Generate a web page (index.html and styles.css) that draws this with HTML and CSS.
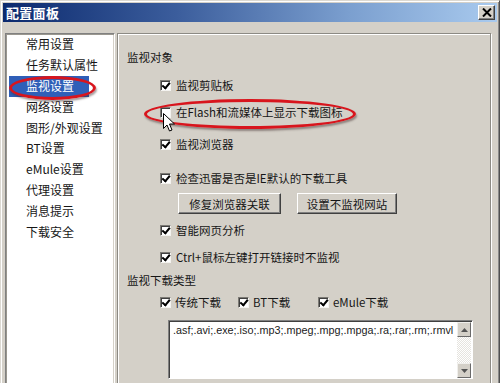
FILE: index.html
```html
<!DOCTYPE html>
<html lang="zh-CN">
<head>
<meta charset="utf-8">
<title>配置面板</title>
<link rel="stylesheet" href="styles.css">
</head>
<body>
<div class="window">
  <div class="titlebar">
    <span class="title">配置面板</span>
    <span class="close"><svg width="10" height="9" viewBox="0 0 10 9"><path d="M1 0.5 L9 8.5 M9 0.5 L1 8.5" stroke="#000" stroke-width="2"/></svg></span>
  </div>
  <div class="body">
    <ul class="nav">
      <li>常用设置</li>
      <li>任务默认属性</li>
      <li><span class="sel">监视设置</span></li>
      <li>网络设置</li>
      <li>图形/外观设置</li>
      <li>BT设置</li>
      <li>eMule设置</li>
      <li>代理设置</li>
      <li>消息提示</li>
      <li>下载安全</li>
    </ul>
    <div class="panel">
      <div class="row label">监视对象</div>
      <div class="row cb g12"><span class="box on"></span>监视剪贴板</div>
      <div class="row cb g11"><span class="box"></span>在Flash和流媒体上显示下载图标</div>
      <div class="row cb g16"><span class="box on"></span>监视浏览器</div>
      <div class="row cb g18"><span class="box on"></span>检查迅雷是否是IE默认的下载工具</div>
      <div class="btns">
        <span class="btn w103">修复浏览器关联</span>
        <span class="btn w100">设置不监视网站</span>
      </div>
      <div class="row cb g8"><span class="box on"></span>智能网页分析</div>
      <div class="row cb g11"><span class="box on"></span>Ctrl+鼠标左键打开链接时不监视</div>
      <div class="row label g7">监视下载类型</div>
      <div class="row cb g6">
        <span class="opt w78"><span class="box on"></span>传统下载</span>
        <span class="opt w80"><span class="box on"></span>BT下载</span>
        <span class="opt"><span class="box on"></span>eMule下载</span>
      </div>
      <div class="textbox">
        <div class="text">.asf;.avi;.exe;.iso;.mp3;.mpeg;.mpg;.mpga;.ra;.rar;.rm;.rmvl</div>
        <div class="scroll">
          <span class="sbtn"><svg width="7" height="4" viewBox="0 0 7 4"><path d="M3.5 0 L7 4 L0 4 Z" fill="#555"/></svg></span>
          <span class="track"></span>
          <span class="sbtn"><svg width="7" height="4" viewBox="0 0 7 4"><path d="M0 0 L7 0 L3.5 4 Z" fill="#555"/></svg></span>
        </div>
      </div>
    </div>
  </div>
  <div class="mark mark-nav"></div>
  <div class="mark mark-flash"></div>
  <svg class="cursor" width="13" height="20" viewBox="0 0 13 20"><path d="M0.5 0.5 L0.5 15.5 L4 12 L6.5 18 L9 17 L6.5 11 L11.5 11 Z" fill="#fff" stroke="#000" stroke-width="1"/></svg>
</div>
</body>
</html>
```

FILE: styles.css
```css
* { box-sizing: border-box; }
html, body { margin: 0; padding: 0; }
body {
  width: 500px;
  height: 383px;
  overflow: hidden;
  background: #d4d0c8;
  font-family: "Noto Sans CJK SC", "Liberation Sans", sans-serif;
  font-size: 11.5px;
  color: #161616;
}
.window {
  position: relative;
  width: 500px;
  height: 383px;
  overflow: hidden;
  background: #d4d0c8;
  border-top: 1px solid #dcd9d2;
  border-left: 1px solid #dcd9d2;
  border-right: 1px solid #505050;
  box-shadow: inset 1px 1px #ffffff, inset -1px 0 #8a8a8a;
  padding: 2px 2px 0 2px;
}
.titlebar {
  height: 19px;
  display: flex;
  align-items: center;
  justify-content: space-between;
  padding: 0 2px 0 3px;
  background: linear-gradient(90deg, #0c2a6e 0%, #3b5d9c 35%, #7b9fcf 70%, #a9caee 100%);
}
.title {
  color: #fff;
  font-weight: bold;
  font-size: 13px;
  letter-spacing: 0.3px;
  line-height: 19px;
}
.close {
  width: 17px;
  height: 15px;
  background: #d4d0c8;
  border-top: 1px solid #fff;
  border-left: 1px solid #fff;
  border-right: 1px solid #404040;
  border-bottom: 1px solid #404040;
  box-shadow: inset -1px -1px #808080;
  display: flex;
  align-items: center;
  justify-content: center;
}
.body {
  display: flex;
  gap: 2px;
  margin-top: 11px;
  padding: 0 6px 0 2px;
  height: 360px;
}
.nav {
  list-style: none;
  margin: 0;
  padding: 0;
  width: 110px;
  background: #fff;
  border-top: 1px solid #808080;
  border-left: 1px solid #808080;
  border-right: 1px solid #fff;
  box-shadow: inset 1px 1px #9a978f, inset -1px 0 #d4d0c8;
  font-size: 12px;
}
.nav li {
  height: 20.9px;
  line-height: 20.9px;
  padding-left: 20px;
  white-space: nowrap;
}
.sel {
  display: inline-block;
  margin-left: -17px;
  padding: 0 15px 0 17px;
  background: #2f5fb8;
  color: #fff;
}
.panel {
  flex: 1;
  border: 1px solid #8c8a84;
  box-shadow: inset 1px 1px #fff, 1px 1px #fff;
  padding: 15px 0 0 9px;
  display: flex;
  flex-direction: column;
}
.row {
  height: 16px;
  display: flex;
  align-items: center;
  white-space: nowrap;
}
.cb { padding-left: 33px; }
.g6 { margin-top: 6px; }
.g7 { margin-top: 7px; }
.g8 { margin-top: 8px; }
.g11 { margin-top: 11px; }
.g12 { margin-top: 12px; }
.g16 { margin-top: 16px; }
.g18 { margin-top: 18px; }
.box {
  width: 11px;
  height: 11px;
  flex: none;
  margin-right: 5px;
  background: #fff;
  border-top: 1px solid #7c7a75;
  border-left: 1px solid #7c7a75;
  border-right: 1px solid #f4f3f0;
  border-bottom: 1px solid #f4f3f0;
  box-shadow: inset 1px 1px #404040;
  position: relative;
}
.box.on::after {
  content: "";
  position: absolute;
  left: 2px;
  top: 0px;
  width: 3px;
  height: 6px;
  border-right: 2px solid #000;
  border-bottom: 2px solid #000;
  transform: rotate(40deg);
  transform-origin: 60% 60%;
}
.opt {
  display: flex;
  align-items: center;
}
.w78 { width: 78px; }
.w80 { width: 80px; }
.opt .box { margin-right: 4px; }
.btns {
  display: flex;
  gap: 16px;
  margin-top: 7px;
  padding-left: 51px;
}
.btn {
  height: 21px;
  display: flex;
  align-items: center;
  justify-content: center;
  background: #d4d0c8;
  border-top: 1px solid #fff;
  border-left: 1px solid #fff;
  border-right: 1px solid #404040;
  border-bottom: 1px solid #404040;
  box-shadow: inset -1px -1px #808080;
}
.w103 { width: 103px; }
.w100 { width: 100px; }
.textbox {
  margin-top: 10px;
  margin-left: 41px;
  width: 305px;
  height: 59px;
  display: flex;
  background: #fff;
  border-top: 1px solid #808080;
  border-left: 1px solid #808080;
  border-right: 1px solid #fff;
  border-bottom: 1px solid #fff;
  box-shadow: inset 1px 1px #404040;
}
.text {
  flex: 1;
  min-width: 0;
  padding: 2px 0 0 4px;
  font-family: "Liberation Sans", sans-serif;
  font-size: 10.8px;
  line-height: 14px;
  white-space: nowrap;
  color: #222;
}
.scroll {
  width: 14px;
  margin: 1px 1px 0 0;
  display: flex;
  flex-direction: column;
  background: repeating-conic-gradient(#fff 0 25%, #e6e4df 0 50%) 0 0 / 2px 2px;
}
.sbtn {
  height: 15px;
  display: flex;
  align-items: center;
  justify-content: center;
  background: #d4d0c8;
  border-top: 1px solid #f0efec;
  border-left: 1px solid #f0efec;
  border-right: 1px solid #6a6a6a;
  border-bottom: 1px solid #6a6a6a;
}
.track { flex: 1; }
.mark {
  position: absolute;
  border: 3px solid #d8151d;
  border-radius: 50%;
  box-shadow: 1px 2px 2px rgba(60, 40, 40, 0.45);
}
.mark-nav { left: 8px; top: 75px; width: 87px; height: 24px; }
.mark-flash { left: 143px; top: 98px; width: 212px; height: 30px; }
.cursor { position: absolute; left: 162px; top: 112px; }
```
